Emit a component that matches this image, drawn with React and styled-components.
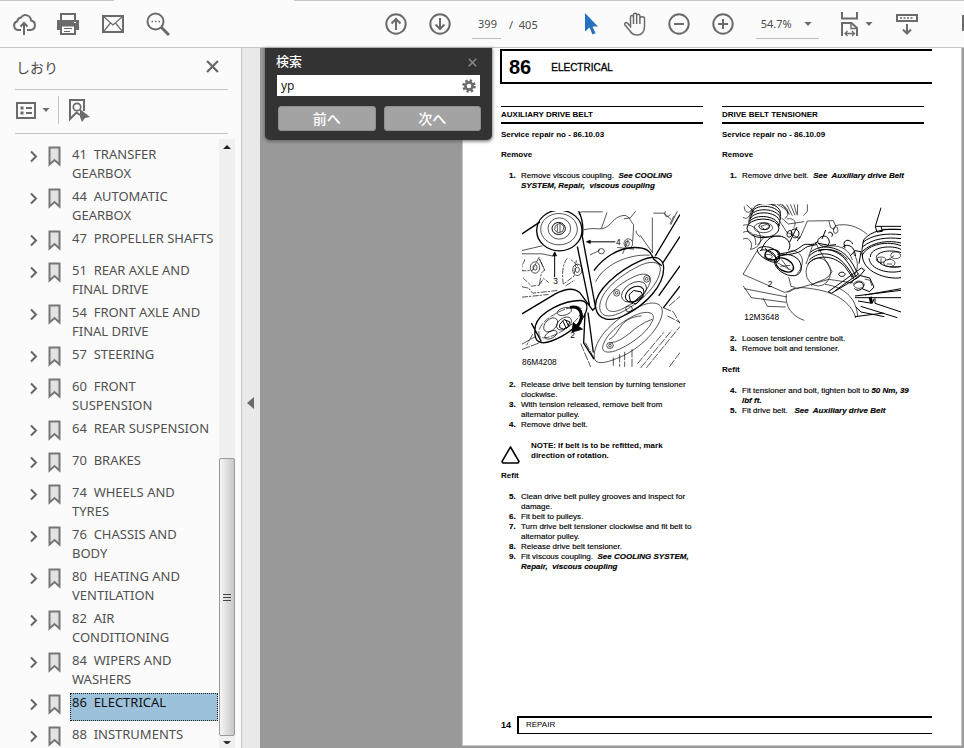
import React from "react";
import styled, { createGlobalStyle, css } from "styled-components";

const Global = createGlobalStyle`
  * { box-sizing: border-box; }
  html, body, #root { height: 100%; }
  body { margin: 0; overflow: hidden; background: #999; }
  button, input, select { font: inherit; color: inherit; }
  button { border: 0; padding: 0; background: none; cursor: pointer; }
  p, h1, h2, h3, ol, ul, figure { margin: 0; padding: 0; }
`;

const Shell = styled.div`
  display: flex;
  flex-direction: column;
  height: 100vh;
  font-family: "Noto Sans", "Noto Sans CJK JP", sans-serif;
  color: #4b4b4b;
`;

/* ---------- toolbar ---------- */
const TabEdge = styled.div`
  display: grid;
  grid-template-columns: 114px 180px 1fr;
  height: 1px;
  flex: none;
  background: #c8c8c8;
`;
const ActiveTabEdge = styled.span`
  grid-column: 2;
  background: #fbfbfb;
`;
const Toolbar = styled.header`
  display: flex;
  align-items: center;
  flex: none;
  height: 47px;
  padding-left: 12px;
  background: #fbfbfb;
  border-bottom: 1px solid #c8c8c8;
  overflow: hidden;
`;
const ToolGroup = styled.div`
  display: flex;
  align-items: center;
  flex: none;
  gap: ${(p) => p.$gap || 20}px;
  margin-left: ${(p) => p.$before || 0}px;
`;
const IconButton = styled.button`
  display: flex;
  align-items: center;
  justify-content: center;
  flex: none;
  width: ${(p) => p.$w || 24}px;
  height: ${(p) => p.$h || 24}px;
`;
const Field = styled.label`
  display: flex;
  align-items: center;
  height: 30px;
  border-bottom: 1px solid #bdbdbd;
`;
const PageInput = styled.input`
  width: 29px;
  border: 0;
  outline: 0;
  padding: 0 0 0 2px;
  background: none;
  text-align: center;
  font-size: 11px;
`;
const PageCount = styled.span`
  margin-left: 7px;
  font-size: 11px;
  white-space: pre;
`;
const ZoomSelect = styled.select`
  appearance: none;
  width: 48px;
  border: 0;
  outline: 0;
  padding: 0 0 0 5px;
  background: none;
  font-size: 11px;
`;

/* ---------- bookmarks ---------- */
const Body = styled.div`
  display: flex;
  flex: 1;
  min-height: 0;
`;
const Sidebar = styled.aside`
  display: flex;
  flex-direction: column;
  flex: none;
  width: 242px;
  background: #fbfbfb;
  border-right: 1px solid #c4c4c4;
`;
const SideHead = styled.div`
  display: flex;
  align-items: center;
  justify-content: space-between;
  flex: none;
  height: 42px;
  margin: 0 13px 0 15px;
  padding: 0 4px 4px 1px;
  border-bottom: 1px solid #c4c4c4;
`;
const SideTitle = styled.h2`
  font: 400 14px "Noto Sans CJK JP", sans-serif;
`;
const SideTools = styled.div`
  display: flex;
  align-items: center;
  flex: none;
  height: 44px;
  margin: 0 13px 0 15px;
  padding-bottom: 3px;
  border-bottom: 1px solid #c4c4c4;
`;
const Rule = styled.span`
  width: 1px;
  height: 28px;
  margin: 0 8px;
  background: #c4c4c4;
`;
const Outline = styled.div`
  display: flex;
  flex: 1;
  min-height: 0;
  padding: 5px 6px 0 0;
`;
const Bookmarks = styled.ul`
  flex: 1;
  min-width: 0;
  padding: 6px 1px 0 27px;
  list-style: none;
  overflow: hidden;
`;
const BookmarkRow = styled.li`
  display: flex;
  align-items: flex-start;
  padding-bottom: 4px;
`;
const Expander = styled.button`
  width: 14px;
  height: 22px;
  margin-right: 7px;
  flex: none;
`;
const BookmarkLink = styled.a`
  flex: 1;
  min-height: 28px;
  margin-left: 9px;
  padding-left: 2px;
  font-size: 13px;
  line-height: 19px;
  white-space: pre;
  text-decoration: none;
  color: #505050;
  ${(p) => p.$selected && css`
    background: #9cc1da;
    outline: 1px dotted #222;
    outline-offset: -1px;
    color: #111;
  `}
`;
const ScrollTrack = styled.div`
  display: flex;
  flex-direction: column;
  flex: none;
  width: 16px;
  background: #f0f0f0;
`;
const ScrollSpace = styled.div`
  flex: 1;
`;
const ScrollThumb = styled.div`
  display: flex;
  align-items: center;
  justify-content: center;
  height: 278px;
  border: 1px solid #999;
  border-radius: 2px;
  background: linear-gradient(90deg, #f6f6f6, #e0e0e0 45%, #c6c8cc);
`;
const Splitter = styled.button`
  display: flex;
  align-items: center;
  justify-content: center;
  flex: none;
  width: 18px;
  padding-top: 10px;
  background: #e9e9e9;
`;

/* ---------- search panel ---------- */
const Viewer = styled.main`
  position: relative;
  display: flex;
  flex: 1;
  min-width: 0;
  padding: 0 2px 2px 202px;
  background: #999;
`;
const SearchPanel = styled.section`
  position: absolute;
  top: 0;
  left: 5px;
  width: 227px;
  padding: 3px 11px 9px 11px;
  border-radius: 0 0 5px 5px;
  background: #333;
  box-shadow: 0 1px 3px 1px rgba(90, 90, 90, 0.65);
  font-family: "Noto Sans", "Noto Sans CJK JP", sans-serif;
`;
const SearchHead = styled.div`
  display: flex;
  align-items: center;
  justify-content: space-between;
  height: 24px;
  padding: 0 4px 5px 0;
`;
const SearchTitle = styled.h2`
  font-size: 13px;
  font-weight: 500;
  color: #fff;
`;
const SearchBox = styled.label`
  display: flex;
  align-items: center;
  height: 21px;
  margin: 0 1px;
  padding: 0 3px 0 4px;
  background: #fff;
`;
const SearchInput = styled.input`
  flex: 1;
  min-width: 0;
  border: 0;
  outline: 0;
  padding: 0;
  font-size: 12px;
  color: #222;
`;
const SearchActions = styled.div`
  display: grid;
  grid-template-columns: 1fr 1fr;
  gap: 8px;
  margin: 10px 0 0 2px;
`;
const SearchButton = styled.button`
  height: 25px;
  border: 1px solid #8f8f8f;
  border-radius: 3px;
  background: #a3a3a3;
  font-size: 14px;
  line-height: 22px;
  font-weight: 500;
  color: #fff;
`;

/* ---------- manual page ---------- */
const Paper = styled.article`
  display: flex;
  flex-direction: column;
  flex: 1;
  min-width: 0;
  padding: 1px 29px 11px 37px;
  border: solid #c8c8c8;
  border-width: 0 1px 1px 1px;
  background: #fff;
  color: #000;
  font: 8px/10px "Liberation Sans", Arial, sans-serif;
`;
const Chapter = styled.header`
  display: flex;
  align-items: center;
  gap: 20px;
  height: 35px;
  padding-left: 7px;
  border: solid #000;
  border-width: 2px 0 2px 2px;
`;
const ChapterNumber = styled.span`
  font-size: 20px;
  line-height: 24px;
  font-weight: 700;
`;
const ChapterName = styled.h1`
  padding-top: 2px;
  font-size: 10px;
  line-height: 12px;
  font-weight: 400;
  -webkit-text-stroke: 0.3px #000;
`;
const Columns = styled.div`
  display: grid;
  grid-template-columns: 1fr 1fr;
  gap: 19px;
  margin: 22px 8px 0 1px;
`;
const Column = styled.section`
  min-width: 0;
`;
const Topic = styled.h2`
  height: 18px;
  margin-bottom: 6px;
  border-top: 1px solid #000;
  border-bottom: 2px solid #000;
  font-size: 8px;
  line-height: 15px;
  font-weight: 700;
`;
const Lead = styled.h3`
  margin-bottom: ${(p) => (p.$wide ? 11 : 10)}px;
  font-size: 8px;
  line-height: 10px;
  font-weight: 700;
`;
const Steps = styled.ol`
  padding-left: 8px;
  margin-bottom: 11px;
  list-style: none;
`;
const Step = styled.li`
  display: grid;
  grid-template-columns: 12px 1fr;
  -webkit-text-stroke: 0.15px #000;
`;
const StepNumber = styled.span`
  font-weight: 700;
`;
const Ref = styled.em`
  font-weight: 700;
  white-space: pre;
`;
const Figure = styled.figure`
  margin: ${(p) => p.$top}px 0 ${(p) => p.$bottom}px 21px;
  svg { display: block; }
`;
const Note = styled.div`
  display: flex;
  align-items: flex-start;
  gap: 11px;
  margin-bottom: 10px;
  font-weight: 700;
  svg { margin-top: 5px; margin-bottom: -3px; }
`;
const PageFooter = styled.footer`
  display: flex;
  align-items: center;
  margin-top: auto;
`;
const PageNumber = styled.span`
  width: 17px;
  padding-left: 1px;
  font-size: 9px;
  font-weight: 700;
`;
const FooterName = styled.span`
  flex: 1;
  height: 18px;
  padding-left: 7px;
  border: solid #000;
  border-width: 2px 0 1px 2px;
  line-height: 14px;
`;

/* ---------- icons ---------- */
const G = "#6b6b6b";
const Svg = ({ w = 24, h = 24, children, sw = 2 }) => (
  <svg width={w} height={h} viewBox={`0 0 ${w} ${h}`} fill="none" stroke={G} strokeWidth={sw} aria-hidden="true">
    {children}
  </svg>
);
const Cloud = () => (
  <Svg>
    <path d="M9 18H6.500a4.500 4.500 0 0 1-1.200-8.800A4.500 4.500 0 0 1 9 5.500a5.500 5.500 0 0 1 10 3 4.800 4.800 0 0 1-.5 9.500H15" />
    <path d="M12 23V11M8.500 14.500 12 11l3.500 3.500" />
  </Svg>
);
const Printer = () => (
  <Svg>
    <path d="M5 8V2h14v6" />
    <path d="M1 8h22v10h-4v-4H5v4H1z" fill={G} stroke="none" />
    <path d="M5 13.500h14V22H5z" fill="#fbfbfb" />
    <path d="M8 16.500h8M8 19.500h6" strokeWidth="1" />
    <path d="M18 10.500h2" stroke="#fff" strokeWidth="1" />
  </Svg>
);
const Mail = () => (
  <Svg>
    <path d="M2 4h20v16H2z" />
    <path d="m3 5 9 8 9-8M3 19l6.500-8M21 19l-6.500-8" strokeWidth="1.200" />
  </Svg>
);
const Find = () => (
  <Svg>
    <circle cx="9.500" cy="9.500" r="8" />
    <path d="m15 15 8 8" strokeWidth="3" />
    <path d="M5.500 9.500h8.500" strokeWidth="1.500" strokeDasharray="1.500 2" />
  </Svg>
);
const Round = ({ d }) => (
  <Svg>
    <circle cx="12" cy="12" r="9.700" />
    <path d={d} />
  </Svg>
);
const Pointer = () => (
  <Svg w={16}>
    <path d="M2 1v18.500l4.500-4 3 7 3-1.300-3-6.700H15z" fill="#2472c0" stroke="none" />
  </Svg>
);
const Hand = () => (
  <Svg sw={1.5}>
    <path d="M7.500 14.500V5c0-2 3-2 3 0v7V2.800c0-2 3.200-2 3.200 0V12 3.800c0-2 3.200-2 3.200 0V12 6.300c0-2 4.600-2 4.600 0V14c0 5.500-2.500 9-7.500 9-3.500 0-5.500-1.500-7-4l-5-6c-1.200-2 1-3.200 2.500-1.700z" />
  </Svg>
);
const Caret = () => (
  <Svg w={8} h={6}>
    <path d="M.5 1h7L4 5z" fill={G} stroke="none" />
  </Svg>
);
const FitWidth = () => (
  <Svg w={20} h={26}>
    <path d="M2 1v6.500h15V1" />
    <path d="M2 25V12h9.500l5.500 5v8" />
    <path d="M11 12v5.500h6" strokeWidth="1.500" />
    <path d="M5 22.500h9.500M7.500 20 5 22.500 7.500 25M12 20l2.500 2.500L12 25" strokeWidth="1.300" />
  </Svg>
);
const Keyboard = () => (
  <Svg>
    <path d="M2 3h20v6H2z" />
    <path d="M5 6h14" strokeWidth="1.500" strokeDasharray="2 1.500" />
    <path d="M12 12v10M8 17.500l4 4 4-4" />
  </Svg>
);
const Close = ({ size, color, sw = 2.5 }) => (
  <svg width={size} height={size} viewBox="0 0 12 12" stroke={color} strokeWidth={sw} aria-hidden="true">
    <path d="m1 1 10 10M11 1 1 11" />
  </svg>
);
const ListIcon = () => (
  <Svg w={20} h={17}>
    <path d="M1 1h18v15H1z" />
    <path d="M4.500 6h3M4.500 11h3" strokeWidth="3" />
    <path d="M10 6h6M10 11h6" />
  </Svg>
);
const FindBookmark = () => (
  <Svg w={22}>
    <path d="M12 17 8.500 14.500 2 21V2h14v11" />
    <circle cx="9" cy="9" r="3.700" strokeWidth="1.700" />
    <path d="m12 11 10 8-5 1-3 4-2-5z" fill={G} stroke="none" />
  </Svg>
);
const BookmarkIcon = () => (
  <Svg w={13} h={22}>
    <path d="M1.500 2.500h10v17l-5-4.500-5 4.500z" fill="#e3e3e3" stroke="#777" />
  </Svg>
);
const Chevron = () => (
  <Svg w={14} h={22}>
    <path d="m4 6.500 5 5-5 5" stroke="#666" />
  </Svg>
);
const Gear = () => (
  <Svg w={14} h={14}>
    <circle cx="7" cy="7" r="5.500" strokeWidth="2.600" strokeDasharray="2.300 2.020" />
    <circle cx="7" cy="7" r="3.600" strokeWidth="2.600" />
  </Svg>
);
const Warning = () => (
  <svg width="19" height="18" viewBox="0 0 19 18" fill="none" stroke="#000" strokeWidth="1.500" aria-hidden="true">
    <path d="M9.500 1 18 15.500 17 17H2l-1-1.500z" strokeLinejoin="round" />
  </svg>
);

/* ---------- illustrations ---------- */
const BeltDrawing = () => (
  <svg width="158" height="157" viewBox="24 36 474 470" fill="none" stroke="#000" strokeWidth="2" role="img" aria-label="Auxiliary drive belt routing">
    <g strokeWidth="4">
      <ellipse cx="136" cy="94" rx="68" ry="61" />
      <path d="M24 104 78 68M194 36c12 24 14 56 11 76l40 215M190 142l37 178M24 344l100-60c34-18 60-16 74-3l38 52 9-9" />
      <path d="M240 214c26-36 72-69 122-69 34 0 48 10 55 32M245 327c-8-50 70-115 140-145 40-17 64-4 64 25 0 54-54 108-112 139-47 25-84 18-92-19zM417 178l26 22M424 170l74-124M446 192l52-80M434 290l64-90M448 326l50-65" />
      <path d="M64 380c12-44 90-77 137-76 30 3 19 40-8 69-27 30-75 56-106 58-20-1-28-14-23-51zM52 372l30 55M213 342l-4 90 31 48M222 340l16 120" />
    </g>
    <g>
      <ellipse cx="135" cy="90" rx="55" ry="47" />
      <ellipse cx="136" cy="88" rx="34" ry="32" />
      <ellipse cx="134" cy="88" rx="20" ry="18" strokeWidth="3" />
      <path d="m124 80 14-8 12 10-4 15-15 4-9-9zM130 78v20M138 75v24" />
      <path d="M24 154l61-14M24 164h60l34 7M200 50c-8-5-4-12 6-12h60M210 92c30-8 41 0 57-4 28-8 28-34 60-39 18-3 22 17 32 28l-3 50M368 94c-7 5 7 15 10 20M262 88l17-48M365 36l-16 20-20 3M415 55v106M378 108l38 53M454 36c-7 21 12 18 14 10M490 36l-20 41M480 50l-12 24M418 42h33l20 19" />
      <path d="M32 180c0 12-11 13-8 35l31-1 20-40 17 40M76 180l16 32-10 10-6 36-23 3-28-27M75 258l14-20 15 12M160 177c-16 17-16 56-12 78l32-24 7-48M24 263l20 4 12 15 74-8M24 294l80-8M192 200l-25-22M155 260l28-18" strokeDasharray="18 3 7 4" />
      <ellipse cx="63" cy="205" rx="14" ry="17" /><ellipse cx="63" cy="205" rx="6" ry="8" />
      <ellipse cx="190" cy="212" rx="14" ry="17" /><ellipse cx="190" cy="212" rx="6" ry="8" />
      <ellipse cx="343" cy="133" rx="13" ry="14" /><ellipse cx="340" cy="133" rx="6" ry="8" />
      <ellipse cx="262" cy="156" rx="9" ry="8" /><path d="m228 167 20-9 10-6M310 145l50 5M326 164l16-40" />
      <path d="M257 325c0-48 60-97 125-128 39-16 59-4 57 15-5 49-66 103-120 129-40 18-60 9-62-16z" />
      <path d="M276 319c-2-33 45-70 90-89 29-12 47-2 43 17-9 36-54 68-90 85-24 9-41 6-43-13z" />
      <ellipse cx="360" cy="278" rx="41" ry="26" transform="rotate(-32 360 278)" />
      <ellipse cx="362" cy="285" rx="30" ry="21" transform="rotate(-32 362 285)" strokeWidth="3" />
      <path d="m345 287 14-13 22 4 7 15-22 22-17-9zM353 315l29-27" strokeWidth="3" />
      <ellipse cx="398" cy="239" rx="9" ry="10" /><circle cx="398" cy="239" r="4" />
      <ellipse cx="308" cy="281" rx="9" ry="10" /><circle cx="308" cy="281" r="4" />
      <ellipse cx="345" cy="329" rx="10" ry="9" />
      <path d="M245 248c20-45 89-84 162-80" />
      <path d="M241 478c-6-60 67-126 140-158 43-19 70-4 63 26-11 54-80 112-136 132-36 15-62 18-67 0zM266 444c7-41 68-86 108-100 34-11 52 0 41 22-18 40-76 76-111 89-25 8-40 3-38-11z" />
      <path d="M285 421c35-17 27-65 98-71M286 432c55-8 66-49 129-72" />
      <ellipse cx="288" cy="439" rx="10" ry="9" /><circle cx="288" cy="439" r="4" />
      <path d="M76 391c12-36 79-68 112-68 27 1 14 26-11 49-27 24-61 41-84 44-17 1-21-6-17-25z" strokeDasharray="22 4" />
      <ellipse cx="110" cy="377" rx="16" ry="25" transform="rotate(45 110 377)" /><ellipse cx="111" cy="407" rx="20" ry="10" transform="rotate(-28 111 407)" /><ellipse cx="151" cy="337" rx="22" ry="11" transform="rotate(-15 151 337)" />
      <ellipse cx="150" cy="373" rx="25" ry="16" transform="rotate(-35 150 373)" />
      <path d="m137 376 13-15 17 7-5 15-14 7-11-5zM147 366l10 22M155 362l9 20" strokeWidth="3" />
      <path d="M24 435l39-22M24 451l52-20M56 405l-18 33M448 326l30 12 20 35M460 350l38 20M465 320l33-28M200 433l30 70M214 430l26 47M298 475v28M317 465v38M332 458v45M354 450v53M370 494l79-94M380 506l94-113M397 506l101-124M466 503l32-43" strokeDasharray="25 4" />
    </g>
    <path d="M220 128h84M122 160v74" strokeWidth="3" /><path d="m217 128 12-5v10zM122 158l-6 12h12z" fill="#000" />
    <path d="M168 325c31-7 46 24 23 55" strokeWidth="9" /><path d="m177 370 29 20-32 9z" fill="#000" />
    <g fill="#000" stroke="none" fontFamily="Liberation Sans, Arial, sans-serif" fontSize="25">
      <text x="306" y="137">4</text><text x="118" y="254">3</text><text x="169" y="416">2</text>
      <text x="24" y="497">86M4208</text>
    </g>
  </svg>
);
const TensionerDrawing = () => (
  <svg width="158" height="117" viewBox="24 27 474 351" fill="none" stroke="#000" strokeWidth="2" role="img" aria-label="Drive belt tensioner location">
    <g>
      <path d="M53 52c-5-34 78-36 83 0M50 61c-3-38 83-35 87 3M47 70c-2-36 87-34 90 4M44 79c2-36 88-33 91 4M41 88c5-34 86-30 91 5" strokeWidth="3" />
      <ellipse cx="84" cy="100" rx="48" ry="28" strokeWidth="3" fill="#fff" /><ellipse cx="85" cy="98" rx="28" ry="15" />
      <ellipse cx="88" cy="94" rx="16" ry="10" strokeWidth="3" /><path d="M50 45 40 83M137 51l-4 43M77 94l19-6 8 8-14 8z" />
      <path d="M28 34c0 27 23 19 23 4M34 29l24 22M24 67c10 7 20 0 22-14M24 91c17-7 50 8 53 37 2 20-13 33-31 35M24 112c22-10 41 10 38 38M24 132c16-8 32 10 23 31M55 118l33 7-20 25M83 126l54-3" />
      <path d="M112 32c15-13 30-3 42 8 9 10 5 26-5 31M127 28c12 8 27 12 32 28M142 28l22 31M155 28l17 34M166 28l14 33M177 28l8 30M188 28l-1 33M140 69l20 18 48-7M136 82l19 29 40 20M155 72c24-5 31 11 21 26M217 78l78-1 7 16-5 10-10-5-5-19M217 78l-22 51" />
      <ellipse cx="302" cy="105" rx="7" ry="10" />
      <path d="M157 112c8-11 17-3 13 9-5 8-17 8-13-9zM170 106c10-10 26 0 21 15-8 14-25 8-21-15zM186 96l-22 45M195 124l-8 14" strokeWidth="3" />
      <path d="M79 166c10-28 27-44 51-43 28 1 43 25 30 43M67 163c9-13 44-10 59 7 16 17 6 37-13 31-22-5-47-24-46-38zM75 167c12-6 34 0 44 12 9 12-1 19-15 13M90 160c10 11 24 15 35 31" strokeWidth="3" />
      <ellipse cx="112" cy="179" rx="22" ry="16" strokeWidth="4" />
      <ellipse cx="100" cy="185" rx="12" ry="7" />
      <path d="M118 198c7-23 45-26 67-9 21 18 18 51-7 53-26 3-60-20-60-44z" strokeWidth="3" />
      <ellipse cx="149" cy="210" rx="29" ry="18" transform="rotate(30 149 210)" strokeWidth="4" /><path d="m125 202 46 25M140 194l22 30M136 214l30-3M152 178c20-23 48-5 50 17 1 16-7 34-17 42" />
      <path d="M127 178c31-6 49-5 72-24 15-15 39 5 49-16M129 184c32-8 59-5 77-22 14-13 30-8 41-15" strokeWidth="3" />
      <path d="M250 133c10-13 25-13 31 0 7 15-6 26-22 19-9-4-13-10-9-19zM272 105l-11 27M250 145l33 6 20-2M280 114c7-7 17 3 10 11" strokeWidth="3" />
      <path d="M240 141l51 89-10 14c-13 14-38 14-53 28M235 145l-22 62M300 92c36-8 66 1 97 26M270 155c45-9 72 8 82 40" />
      <ellipse cx="250" cy="231" rx="37" ry="42" />
      <path d="M222 184c29-32 78-25 107 7 15 17 26 37 35 57M223 195c30-30 75-21 103 9 14 15 25 32 32 50M218 207c30-31 79-25 109 5 9 10 15 21 24 34M226 172c30-26 80-18 108 10 16 16 25 35 34 54M250 168c35-12 67 1 87 26M330 160l-3-15c3-14 21-11 26 2M323 157c4-10 27-8 34 8l5 18M345 183l15-16 18 3-6 36" strokeWidth="3" />
      <path d="M311 237c4-8 18-7 19 1 0 8-18 9-19-1zM280 290l99-71 10 6-16 20-84 50zM300 287l72-51" strokeWidth="3" />
      <path d="M438 38 421 94h77M421 94l5 17 16-2-4-15M442 103h56M386 135c21-29 68-35 112-31M383 143c26-24 74-29 115-24M382 156c32-26 73-30 116-25M382 169c34-30 80-34 116-25M386 135c-5 20-7 40-3 52M382 180c18-34 78-43 116-28M382 176c-3 56 75 79 116 72M406 186c0-31 65-37 92-23M402 190c4 35 61 48 96 38M424 188c0-20 49-25 74-15M426 190c1 22 48 32 72 24" strokeWidth="3" />
      <ellipse cx="438" cy="194" rx="14" ry="8" /><ellipse cx="482" cy="181" rx="15" ry="10" /><ellipse cx="463" cy="204" rx="17" ry="11" /><path d="M457 196l20-14M455 207h17M438 190v18M470 215h28" />
      <path d="M24 238l124 54 17-3 17-9M24 238l43-72M24 272l25 36 104 14M28 281l128 25M84 309l13 25 55 2M156 292c20-18 50-15 72-11 65 7 121 38 134 88M182 282l99-29 74 11M270 268c65 9 96 49 98 98M154 297c-5 37 18 68 54 79" />
      <path d="M360 303l138-17M360 308h138M390 300l108-19M420 310v15l78 26M344 266l29-25 31 8 13 27-13 14-23-9M358 269c8-12 25-10 27 1 3 13-19 22-27 10M369 318l43 7 5-14M362 335l16 16 70 14M377 334l110 34M360 365l86-11" strokeWidth="3" />
      <ellipse cx="372" cy="269" rx="16" ry="11" /><path d="M405 306l5 18" strokeWidth="9" />
      <path d="M355 175c20 25 14 60-7 75M389 252l16 4 6 17M205 62l12-13V28M161 246l7 28 13 3" />
    </g>
    <g fill="#000" stroke="none" fontFamily="Liberation Sans, Arial, sans-serif" fontSize="25">
      <text x="98" y="277">2</text><text x="28" y="374">12M3648</text>
    </g>
  </svg>
);

const bookmarks = [
  "41  TRANSFER\nGEARBOX", "44  AUTOMATIC\nGEARBOX", "47  PROPELLER SHAFTS", "51  REAR AXLE AND\nFINAL DRIVE",
  "54  FRONT AXLE AND\nFINAL DRIVE", "57  STEERING", "60  FRONT\nSUSPENSION", "64  REAR SUSPENSION",
  "70  BRAKES", "74  WHEELS AND\nTYRES", "76  CHASSIS AND\nBODY", "80  HEATING AND\nVENTILATION",
  "82  AIR\nCONDITIONING", "84  WIPERS AND\nWASHERS", "86  ELECTRICAL", "88  INSTRUMENTS",
];

const Item = ({ n, children }) => (
  <Step>
    <StepNumber>{n}.</StepNumber>
    <span>{children}</span>
  </Step>
);

export default function App() {
  return (
    <Shell>
      <Global />
      <TabEdge><ActiveTabEdge /></TabEdge>
      <Toolbar>
        <ToolGroup>
          <IconButton aria-label="Upload"><Cloud /></IconButton>
          <IconButton aria-label="Print"><Printer /></IconButton>
          <ToolGroup $gap={21} $before={1}>
            <IconButton aria-label="Mail"><Mail /></IconButton>
            <IconButton aria-label="Find"><Find /></IconButton>
          </ToolGroup>
        </ToolGroup>
        <ToolGroup $before={214}>
          <IconButton aria-label="Previous page"><Round d="M12 18V7M7.500 11.500 12 7l4.500 4.500" /></IconButton>
          <IconButton aria-label="Next page"><Round d="M12 6v11M7.500 12.500 12 17l4.500-4.500" /></IconButton>
          <ToolGroup $gap={1}>
            <Field><PageInput aria-label="Page number" defaultValue="399" /></Field>
            <PageCount>/  405</PageCount>
          </ToolGroup>
        </ToolGroup>
        <ToolGroup $before={45}>
          <IconButton $w={16} aria-label="Select tool"><Pointer /></IconButton>
        </ToolGroup>
        <ToolGroup $before={24}>
          <IconButton aria-label="Hand tool"><Hand /></IconButton>
          <IconButton aria-label="Zoom out"><Round d="M7 12h10" /></IconButton>
          <IconButton aria-label="Zoom in"><Round d="M7 12h10M12 7v10" /></IconButton>
        </ToolGroup>
        <ToolGroup $before={21}>
          <Field>
            <ZoomSelect aria-label="Zoom level" defaultValue="54.7%"><option>54.7%</option></ZoomSelect>
            <Caret />
            <ToolGroup $before={7} />
          </Field>
        </ToolGroup>
        <ToolGroup $before={21} $gap={5}>
          <IconButton $w={20} $h={26} aria-label="Fit width"><FitWidth /></IconButton>
          <Caret />
        </ToolGroup>
        <ToolGroup $before={22} $gap={43}>
          <IconButton aria-label="Reading toolbar"><Keyboard /></IconButton>
          <IconButton aria-label="More tools"><Svg><path d="M1 4h22v14H1z" /></Svg></IconButton>
        </ToolGroup>
      </Toolbar>
      <Body>
        <Sidebar>
          <SideHead>
            <SideTitle>しおり</SideTitle>
            <IconButton aria-label="閉じる"><Close size={13} color="#666" sw={2} /></IconButton>
          </SideHead>
          <SideTools>
            <ToolGroup $gap={6} $before={1}>
              <IconButton $w={20} aria-label="Options"><ListIcon /></IconButton>
              <Caret />
            </ToolGroup>
            <Rule />
            <IconButton aria-label="Find bookmark"><FindBookmark /></IconButton>
          </SideTools>
          <Outline>
            <Bookmarks>
              {bookmarks.map((b) => (
                <BookmarkRow key={b}>
                  <Expander aria-label={`Expand ${b}`}><Chevron /></Expander>
                  <BookmarkIcon />
                  <BookmarkLink href="#" $selected={b.startsWith("86")}>{b}</BookmarkLink>
                </BookmarkRow>
              ))}
            </Bookmarks>
            <ScrollTrack>
              <IconButton $w={16} $h={16} aria-label="Scroll up"><Svg w={8} h={5}><path d="M4 0l4 4H0z" fill="#222" stroke="none" /></Svg></IconButton>
              <ScrollSpace />
              <ScrollThumb><Svg w={8} h={9} sw={1}><path d="M0 1.500h8M0 4.500h8M0 7.500h8" stroke="#444" /></Svg></ScrollThumb>
              <IconButton $w={16} $h={12} aria-label="Scroll down"><Svg w={8} h={3}><path d="M0 0h8L5 3H3z" fill="#333" stroke="none" /></Svg></IconButton>
            </ScrollTrack>
          </Outline>
        </Sidebar>
        <Splitter aria-label="Collapse panel">
          <Svg w={8} h={12}><path d="M7 0v12L0 6z" fill={G} stroke="none" /></Svg>
        </Splitter>
        <Viewer>
          <Paper>
            <Chapter>
              <ChapterNumber>86</ChapterNumber>
              <ChapterName>ELECTRICAL</ChapterName>
            </Chapter>
            <Columns>
              <Column>
                <Topic>AUXILIARY DRIVE BELT</Topic>
                <Lead>Service repair no - 86.10.03</Lead>
                <Lead $wide>Remove</Lead>
                <Steps>
                  <Item n={1}>Remove viscous coupling. <Ref>{" See COOLING"}</Ref><br /><Ref>{"SYSTEM, Repair,  viscous coupling"}</Ref></Item>
                </Steps>
                <Figure $top={20} $bottom={12}><BeltDrawing /></Figure>
                <Steps>
                  <Item n={2}>Release drive belt tension by turning tensioner<br />clockwise.</Item>
                  <Item n={3}>With tension released, remove belt from<br />alternator pulley.</Item>
                  <Item n={4}>Remove drive belt.</Item>
                </Steps>
                <Note>
                  <Warning />
                  <p>NOTE: If belt is to be refitted, mark<br />direction of rotation.</p>
                </Note>
                <Lead $wide>Refit</Lead>
                <Steps>
                  <Item n={5}>Clean drive belt pulley grooves and inspect for<br />damage.</Item>
                  <Item n={6}>Fit belt to pulleys.</Item>
                  <Item n={7}>Turn drive belt tensioner clockwise and fit belt to<br />alternator pulley.</Item>
                  <Item n={8}>Release drive belt tensioner.</Item>
                  <Item n={9}>Fit viscous coupling. <Ref>{" See COOLING SYSTEM,"}</Ref><br /><Ref>{"Repair,  viscous coupling"}</Ref></Item>
                </Steps>
              </Column>
              <Column>
                <Topic>DRIVE BELT TENSIONER</Topic>
                <Lead>Service repair no - 86.10.09</Lead>
                <Lead $wide>Remove</Lead>
                <Steps>
                  <Item n={1}>Remove drive belt. <Ref>{" See  Auxiliary drive Belt"}</Ref></Item>
                </Steps>
                <Figure $top={23} $bottom={13}><TensionerDrawing /></Figure>
                <Steps>
                  <Item n={2}>Loosen tensioner centre bolt.</Item>
                  <Item n={3}>Remove bolt and tensioner.</Item>
                </Steps>
                <Lead $wide>Refit</Lead>
                <Steps>
                  <Item n={4}>Fit tensioner and bolt, tighten bolt to <Ref>50 Nm, 39</Ref><br /><Ref>lbf ft.</Ref></Item>
                  <Item n={5}>Fit drive belt. <Ref>{"  See  Auxiliary drive Belt"}</Ref></Item>
                </Steps>
              </Column>
            </Columns>
            <PageFooter>
              <PageNumber>14</PageNumber>
              <FooterName>REPAIR</FooterName>
            </PageFooter>
          </Paper>
          <SearchPanel aria-label="検索">
            <SearchHead>
              <SearchTitle>検索</SearchTitle>
              <button aria-label="検索を閉じる"><Close size={9} color="#888" sw={2} /></button>
            </SearchHead>
            <SearchBox>
              <SearchInput aria-label="検索" defaultValue="yp" />
              <IconButton $w={16} $h={16} aria-label="検索オプション"><Gear /></IconButton>
            </SearchBox>
            <SearchActions>
              <SearchButton>前へ</SearchButton>
              <SearchButton>次へ</SearchButton>
            </SearchActions>
          </SearchPanel>
        </Viewer>
      </Body>
    </Shell>
  );
}
